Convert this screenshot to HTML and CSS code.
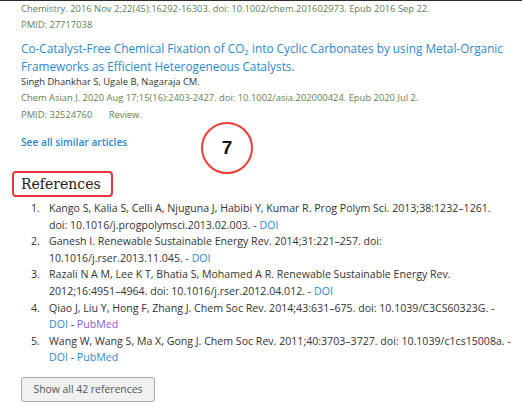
FILE: index.html
```html
<!DOCTYPE html>
<html lang="en">
<head>
<meta charset="utf-8">
<title>References</title>
<link rel="stylesheet" href="styles.css">
</head>
<body>
<div class="page">
  <div class="similar">
    <div class="cite">Chemistry. 2016 Nov 2;22(45):16292-16303. doi: 10.1002/chem.201602973. Epub 2016 Sep 22.</div>
    <div class="pmid">PMID: 27717038</div>
    <a class="title" href="#">Co-Catalyst-Free Chemical Fixation of CO<sub>2</sub> into Cyclic Carbonates by using Metal-Organic Frameworks as Efficient Heterogeneous Catalysts.</a>
    <div class="authors">Singh Dhankhar S, Ugale B, Nagaraja CM.</div>
    <div class="cite cite2">Chem Asian J. 2020 Aug 17;15(16):2403-2427. doi: 10.1002/asia.202000424. Epub 2020 Jul 2.</div>
    <div class="pmid">PMID: 32524760 <span class="type">Review.</span></div>
    <a class="see-all" href="#">See all similar articles</a>
  </div>

  <div class="marker">7</div>

  <h2 class="refs-heading">References</h2>
  <ol class="refs">
    <li><span class="num">1.</span><span class="ref">Kango S, Kalia S, Celli A, Njuguna J, Habibi Y, Kumar R. Prog Polym Sci. 2013;38:1232–1261. doi: 10.1016/j.progpolymsci.2013.02.003. - <a href="#" class="lnk">DOI</a></span></li>
    <li><span class="num">2.</span><span class="ref">Ganesh I. Renewable Sustainable Energy Rev. 2014;31:221–257. doi: 10.1016/j.rser.2013.11.045. - <a href="#" class="lnk">DOI</a></span></li>
    <li><span class="num">3.</span><span class="ref">Razali N A M, Lee K T, Bhatia S, Mohamed A R. Renewable Sustainable Energy Rev. 2012;16:4951–4964. doi: 10.1016/j.rser.2012.04.012. - <a href="#" class="lnk">DOI</a></span></li>
    <li><span class="num">4.</span><span class="ref">Qiao J, Liu Y, Hong F, Zhang J. Chem Soc Rev. 2014;43:631–675. doi: 10.1039/C3CS60323G. - <a href="#" class="lnk">DOI</a> - <a href="#" class="lnk visited">PubMed</a></span></li>
    <li><span class="num">5.</span><span class="ref">Wang W, Wang S, Ma X, Gong J. Chem Soc Rev. 2011;40:3703–3727. doi: 10.1039/c1cs15008a. - <a href="#" class="lnk">DOI</a> - <a href="#" class="lnk">PubMed</a></span></li>
  </ol>
  <button class="show-all" type="button">Show all 42 references</button>
</div>
</body>
</html>
```

FILE: styles.css
```css
html, body {
  margin: 0;
  padding: 0;
  background: #fff;
}

.page {
  position: relative;
  border-top: 1px solid #2b2b2b;
  padding: 0 8px 0 21px;
  font-family: "Open Sans", "Noto Sans", sans-serif;
  color: #333;
}

.similar {
  display: flex;
  flex-direction: column;
  align-items: flex-start;
}

.cite {
  font-size: 9.4px;
  line-height: 15px;
  color: #5f8150;
}

.cite2 {
  line-height: 17px;
}

.pmid {
  font-size: 9.4px;
  line-height: 17px;
  color: #5f8150;
}

.type {
  margin-left: 14px;
}

.title {
  margin-top: 6px;
  font-size: 11.8px;
  line-height: 18px;
  color: #2d88cc;
  text-decoration: none;
}

.title sub {
  font-size: 8px;
  line-height: 0;
  vertical-align: -2px;
}

.authors {
  font-size: 9.4px;
  line-height: 14px;
  color: #333;
}

.see-all {
  margin-top: 10px;
  font-size: 10.2px;
  line-height: 18px;
  font-weight: 600;
  color: #2d88cc;
  text-decoration: none;
}

.marker {
  position: absolute;
  left: 201px;
  top: 121px;
  width: 48px;
  height: 48px;
  border: 2px solid #f03a3a;
  border-radius: 50%;
  background: #fff;
  display: flex;
  align-items: center;
  justify-content: center;
  font-family: "Liberation Sans", Arial, sans-serif;
  font-weight: bold;
  font-size: 19px;
  color: #111;
}

.refs-heading {
  display: inline-block;
  margin: 20px 0 0 -9px;
  padding: 0 10px 0 7px;
  border: 2px solid #e8383d;
  border-radius: 4px;
  font-family: "DejaVu Serif", "Liberation Serif", serif;
  font-weight: normal;
  font-size: 14px;
  line-height: 22px;
  color: #212121;
}

.refs {
  list-style: none;
  margin: 3px 0 0 0;
  padding: 0;
  width: 490px;
}

.refs li {
  display: flex;
  font-size: 10.6px;
  line-height: 16.6px;
  color: #333;
}

.num {
  flex: 0 0 18px;
  margin-left: 10px;
}

.ref {
  flex: 1;
}

.lnk {
  color: #2d88cc;
  text-decoration: none;
}

.lnk.visited {
  color: #8a5cc6;
}

.show-all {
  display: block;
  margin-top: 11px;
  width: 134px;
  height: 25px;
  padding: 0;
  border: 1px solid #a9a9a9;
  border-radius: 3px;
  background: #f0f0f0;
  font-family: "Open Sans", "Noto Sans", sans-serif;
  font-size: 10.4px;
  color: #555;
}
```
